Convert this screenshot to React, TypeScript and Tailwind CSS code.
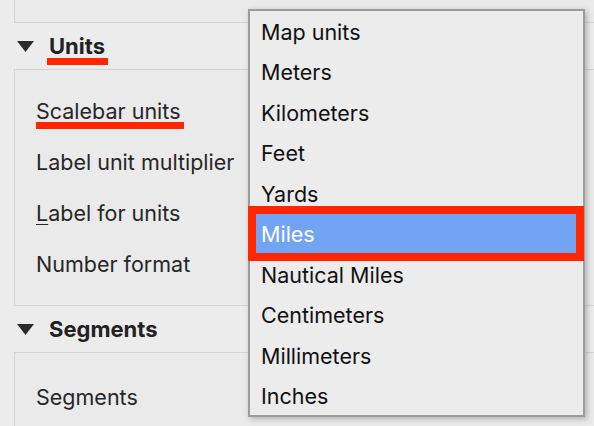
import React from 'react';

const units = [
  'Map units',
  'Meters',
  'Kilometers',
  'Feet',
  'Yards',
  'Miles',
  'Nautical Miles',
  'Centimeters',
  'Millimeters',
  'Inches',
];

function Triangle() {
  return (
    <svg width="17" height="11" viewBox="0 0 17 11" className="shrink-0">
      <polygon points="0,0 17,0 8.5,11" fill="#2b2b2b" />
    </svg>
  );
}

function SectionHeader({ title, marked }: { title: string; marked?: boolean }) {
  return (
    <div className="flex items-center h-full pl-[17px] gap-[15px]">
      <Triangle />
      <span className="relative text-[22px] font-bold text-[#222]">
        {title}
        {marked && <span className="absolute left-[-2px] right-[-3px] top-[28px] h-[7px] bg-[#ff2600]" />}
      </span>
    </div>
  );
}

function Row({ children }: { children: React.ReactNode }) {
  return <div className="h-[51px] flex items-center pl-[21px] text-[21.5px] text-[#262626]">{children}</div>;
}

export default function App() {
  return (
    <div
      className="relative w-[594px] h-[426px] overflow-hidden bg-[#ececec]"
      style={{ fontFamily: 'Inter, "Liberation Sans", sans-serif' }}
    >
      <div className="ml-[14px] w-[620px] h-[23px] border-l border-b border-[#d3d3d3] bg-[#eaeaea]" />
      <div className="h-[46px]">
        <SectionHeader title="Units" marked />
      </div>
      <div className="ml-[14px] w-[620px] h-[237px] border border-[#d3d3d3] bg-[#eaeaea] pt-[16px]">
        <Row>
          <span className="relative">
            Scalebar units
            <span className="absolute left-0 right-[-3px] top-[27px] h-[7px] bg-[#ff2600]" />
          </span>
        </Row>
        <Row>Label unit multiplier</Row>
        <Row>
          <span>
            <span className="underline underline-offset-[3px] decoration-1">L</span>abel for units
          </span>
        </Row>
        <Row>Number format</Row>
      </div>
      <div className="h-[46px]">
        <SectionHeader title="Segments" />
      </div>
      <div className="ml-[14px] w-[620px] h-[100px] border border-[#d3d3d3] bg-[#eaeaea] pt-[19px]">
        <Row>Segments</Row>
      </div>

      {/* dropdown menu */}
      <div className="absolute left-[248px] top-[9px] w-[337px] h-[408px] bg-[#ececec] border-2 border-[#9b9b9b] shadow-[2px_2px_6px_rgba(0,0,0,0.25)] py-[0.5px]">
        {units.map((u) => (
          <div
            key={u}
            className={
              u === 'Miles'
                ? 'h-[40.5px] flex items-center pl-[11px] text-[21.5px] bg-[#72a4f3] text-white'
                : 'h-[40.5px] flex items-center pl-[11px] text-[21.5px] text-[#111]'
            }
          >
            {u}
          </div>
        ))}
      </div>

      {/* highlight annotation */}
      <div className="absolute left-[248px] top-[206px] w-[336px] h-[55px] border-[8px] border-[#ff2600]" />
    </div>
  );
}
